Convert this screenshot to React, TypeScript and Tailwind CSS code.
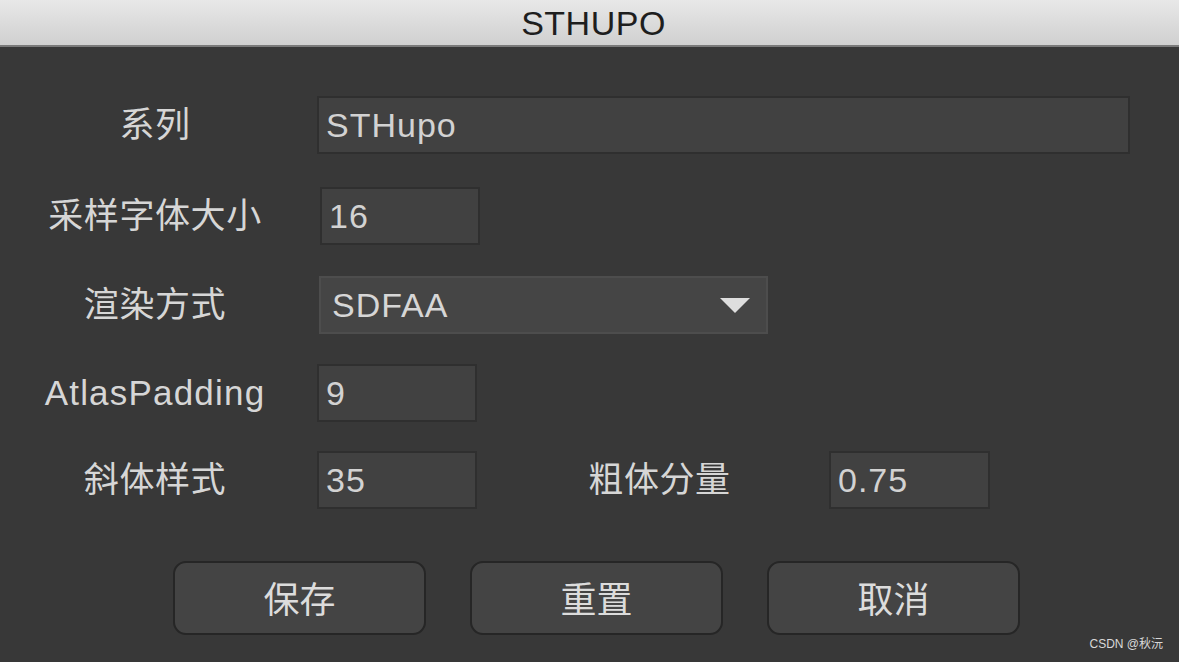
import React from "react";

const font = { fontFamily: '"Liberation Sans", "Noto Sans CJK SC", sans-serif' };

function Label({ children, className = "" }: { children: React.ReactNode; className?: string }) {
  return (
    <div className={"flex items-center justify-center text-[35px] tracking-[0.6px] text-[#d6d6d6] " + className}>
      {children}
    </div>
  );
}

function Field({ value, className = "" }: { value: string; className?: string }) {
  return (
    <div
      className={
        "flex h-[58px] items-center border-2 border-[#2f2f2f] bg-[#414141] pl-[7px] text-[34px] tracking-[1px] text-[#d2d2d2] " +
        className
      }
    >
      {value}
    </div>
  );
}

export default function App() {
  return (
    <div className="flex h-[662px] w-[1179px] flex-col overflow-hidden bg-[#383838]" style={font}>
      <div className="flex h-[47px] shrink-0 items-center justify-center border-b-2 border-[#7a7a7a] bg-gradient-to-b from-[#e8e8e8] to-[#d0d0d0] pl-[8px] text-[34px] leading-none tracking-[0.5px] text-[#1e1e1e]">
        STHUPO
      </div>
      <div className="flex flex-col pl-[40px] pt-[49px]">
        <div className="flex h-[58px] items-center">
          <Label className="w-[230px]">系列</Label>
          <Field value="STHupo" className="ml-[47px] w-[813px]" />
        </div>
        <div className="mt-[33px] flex h-[58px] items-center">
          <Label className="w-[230px]">采样字体大小</Label>
          <Field value="16" className="ml-[50px] w-[160px]" />
        </div>
        <div className="mt-[31px] flex h-[58px] items-center">
          <Label className="w-[230px]">渲染方式</Label>
          <div className="ml-[49px] flex h-[58px] w-[449px] items-center justify-between border-2 border-[#4d4d4d] bg-[#454545] pl-[11px] pr-[16px] text-[34px] tracking-[1px] text-[#d6d6d6]">
            <span>SDFAA</span>
            <svg width="30" height="15" viewBox="0 0 30 15">
              <polygon points="0,0 30,0 15,15" fill="#dedede" />
            </svg>
          </div>
        </div>
        <div className="mt-[30px] flex h-[58px] items-center">
          <Label className="w-[230px] tracking-[1.2px]">AtlasPadding</Label>
          <Field value="9" className="ml-[47px] w-[160px]" />
        </div>
        <div className="mt-[29px] flex h-[58px] items-center">
          <Label className="w-[230px]">斜体样式</Label>
          <Field value="35" className="ml-[47px] w-[160px]" />
          <Label className="ml-[111px] w-[143px]">粗体分量</Label>
          <Field value="0.75" className="ml-[98px] w-[161px]" />
        </div>
        <div className="mt-[52px] flex items-center gap-[44px] pl-[133px]">
          {["保存", "重置", "取消"].map((t) => (
            <div
              key={t}
              className="flex h-[74px] w-[253px] items-center justify-center rounded-[13px] border-2 border-[#262626] bg-[#444444] pt-[5px] text-[36px] text-[#dcdcdc]"
            >
              {t}
            </div>
          ))}
        </div>
      </div>
      <div className="relative flex-1">
        <div className="absolute bottom-[9px] right-[16px] text-[12px] text-[#d8d8d8]">CSDN @秋沅</div>
      </div>
    </div>
  );
}
